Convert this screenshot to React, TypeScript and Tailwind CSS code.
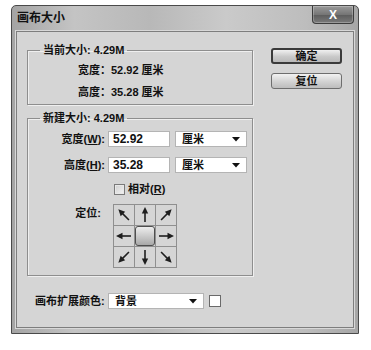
import React from "react";

const FONT = { fontFamily: '"Liberation Sans", "Noto Sans CJK SC", sans-serif' };

function Arrow({ angle }: { angle: number }) {
  return (
    <svg width="20" height="20" viewBox="0 0 20 20">
      <g transform={`rotate(${angle} 10 10)`}>
        <line x1="10" y1="17" x2="10" y2="7" stroke="#1e1e1e" strokeWidth="1.6" />
        <polygon points="10,2 6.8,8.5 13.2,8.5" fill="#1e1e1e" />
      </g>
    </svg>
  );
}

function Caret() {
  return (
    <svg width="8" height="5" viewBox="0 0 8 5">
      <polygon points="0,0 8,0 4,4.5" fill="#111" />
    </svg>
  );
}

function Select({ text, w }: { text: string; w: string }) {
  return (
    <div className={`${w} h-[16px] bg-white border border-[#b4b4b4] flex items-center justify-between pl-[6px] pr-[6px]`}>
      <span className="text-[11px] leading-none font-semibold text-[#111]">{text}</span>
      <Caret />
    </div>
  );
}

function Input({ text }: { text: string }) {
  return (
    <div className="w-[62px] h-[16px] bg-white border border-[#b4b4b4] flex items-center pl-[4px]">
      <span className="text-[12px] leading-none text-[#111]">{text}</span>
    </div>
  );
}

export default function App() {
  const angles = [-45, 0, 45, -90, null, 90, -135, 180, 135];
  return (
    <div className="w-[371px] h-[350px] bg-white pt-[5px] pl-[11px]" style={FONT}>
      <div className="w-[348px] h-[329px] flex flex-col border border-[#4a4a4a] rounded-t-[5px] bg-[linear-gradient(to_right,#a4a4a4,#c4c4c4_18%,#b8b8b8_40%,#cacaca_62%,#bdbdbd_85%,#a6a6a6)]">
        {/* title bar */}
        <div className="h-[25px] flex items-start justify-between">
          <span className="mt-[5px] ml-[5px] text-[12px] leading-[14px] font-bold text-[#111]">画布大小</span>
          <div className="mr-[4px] w-[42px] h-[18px] rounded-b-[4px] border border-[#3c3c3c] border-t-0 bg-[linear-gradient(to_bottom,#9a9a9a,#767676_50%,#5e5e5e_55%,#7a7a7a)] flex items-center justify-center shadow-[inset_0_0_0_1px_rgba(255,255,255,0.25)]">
            <span className="text-[12px] leading-none font-bold text-white">X</span>
          </div>
        </div>
        {/* content */}
        <div className="mx-[4px] mb-[5px] flex-1 border border-[#7e7e7e] bg-[#d5d5d5] shadow-[0_0_0_1px_#d8d8d8] flex flex-col pl-[10px]">
          <div className="flex">
            <div className="w-[226px] flex flex-col">
              <fieldset className="mt-[11px] border border-[#8e8e8e] shadow-[inset_1px_1px_0_#efefef,1px_1px_0_#efefef] pb-[1px]">
                <legend className="ml-[12px] px-[3px] text-[11px] leading-[14px] font-semibold text-[#111]">当前大小: 4.29M</legend>
                <div className="pl-[50px] pt-[2px] flex flex-col text-[11px] font-semibold text-[#111]">
                  <div className="h-[22px] flex items-center">宽度：52.92 厘米</div>
                  <div className="h-[22px] flex items-center">高度：35.28 厘米</div>
                </div>
              </fieldset>
              <fieldset className="mt-[6px] border border-[#8e8e8e] shadow-[inset_1px_1px_0_#efefef,1px_1px_0_#efefef] pb-[7px]">
                <legend className="ml-[12px] px-[3px] text-[11px] leading-[14px] font-semibold text-[#111]">新建大小: 4.29M</legend>
                <div className="pt-[3px] flex flex-col text-[11px] font-semibold text-[#111]">
                  <div className="h-[22px] flex items-center">
                    <span className="w-[77px] text-right">宽度(<span className="underline">W</span>):</span>
                    <div className="ml-[3px]"><Input text="52.92" /></div>
                    <div className="ml-[5px]"><Select text="厘米" w="w-[72px]" /></div>
                  </div>
                  <div className="h-[22px] mt-[4px] flex items-center">
                    <span className="w-[77px] text-right">高度(<span className="underline">H</span>):</span>
                    <div className="ml-[3px]"><Input text="35.28" /></div>
                    <div className="ml-[5px]"><Select text="厘米" w="w-[72px]" /></div>
                  </div>
                  <div className="h-[18px] mt-[4px] flex items-center pl-[86px]">
                    <div className="w-[11px] h-[11px] border border-[#7a7a7a] bg-[linear-gradient(135deg,#cfcfcf,#f4f4f4)] shadow-[inset_0_0_0_1px_#e8e8e8]" />
                    <span className="ml-[3px]">相对(<span className="underline">R</span>)</span>
                  </div>
                  <div className="mt-[6px] flex items-start">
                    <span className="w-[73px] text-right mt-[1px]">定位:</span>
                    <div className="ml-[12px] w-[64px] h-[64px] grid grid-cols-[20px_20px_20px] grid-rows-[20px_20px_20px] gap-px p-px bg-[#8f8f8f]">
                      {angles.map((a, i) =>
                        a === null ? (
                          <div key={i} className="bg-[#d5d5d5] flex items-center justify-center">
                            <div className="w-[20px] h-[20px] rounded-[3px] border border-[#4e4e4e] bg-[linear-gradient(to_bottom,#ededed,#c4c4c4_60%,#a8a8a8)]" />
                          </div>
                        ) : (
                          <div key={i} className="bg-[#d5d5d5] flex items-center justify-center">
                            <Arrow angle={a} />
                          </div>
                        )
                      )}
                    </div>
                  </div>
                </div>
              </fieldset>
            </div>
            <div className="ml-[18px] mt-[16px] flex flex-col">
              <div className="w-[71px] h-[16px] rounded-[3px] border-2 border-[#3a3a3a] bg-[linear-gradient(to_bottom,#f0f0f0,#c9c9c9_55%,#b9b9b9)] flex items-center justify-center">
                <span className="text-[11px] leading-none font-bold text-[#111]">确定</span>
              </div>
              <div className="mt-[9px] w-[71px] h-[16px] rounded-[3px] border border-[#6e6e6e] bg-[linear-gradient(to_bottom,#f2f2f2,#d2d2d2_55%,#bdbdbd)] flex items-center justify-center">
                <span className="text-[11px] leading-none font-bold text-[#111]">复位</span>
              </div>
            </div>
          </div>
          <div className="mt-[17px] ml-[8px] flex items-center text-[11px] font-semibold text-[#111]">
            <span className="w-[73px] shrink-0 whitespace-nowrap">画布扩展颜色:</span>
            <Select text="背景" w="w-[96px]" />
            <div className="ml-[5px] w-[12px] h-[12px] bg-white border border-[#6a6a6a]" />
          </div>
        </div>
      </div>
    </div>
  );
}
